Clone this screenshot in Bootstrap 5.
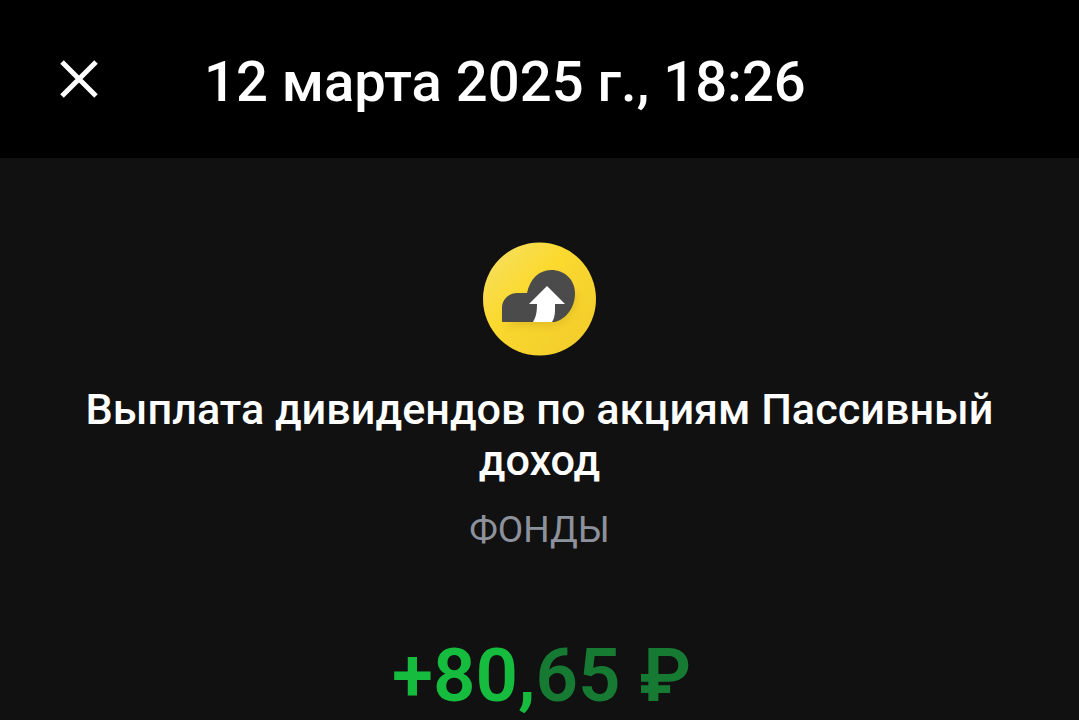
<!DOCTYPE html>
<html lang="ru">
<head>
    <meta charset="UTF-8">
    <meta name="viewport" content="width=device-width, initial-scale=1.0">
    <title>Операция</title>
    <link href="https://cdn.jsdelivr.net/npm/bootstrap@5.3.2/dist/css/bootstrap.min.css" rel="stylesheet">
    <style>
        html, body { height: 720px; overflow: hidden; }
        body { background: #111; font-family: Roboto, "Liberation Sans", sans-serif; color: #fff; }
        .top-bar { height: 158px; background: #000; padding-left: 58px; }
        .close-btn { width: 42px; height: 42px; padding: 0; background: none; border: 0; line-height: 0; margin-right: 104px; }
        .top-date { font-size: 56.2px; font-weight: 500; line-height: 1; margin: 6px 0 0; }
        .op-body { padding-top: 84px; }
        .op-title { font-size: 43.2px; font-weight: 500; line-height: 51px; width: 960px; margin: 28px 0 0; }
        .op-cat { font-size: 37px; font-weight: 400; color: #8d919c; line-height: 40px; margin-top: 24px; }
        .op-sum { font-size: 74.5px; font-weight: 600; line-height: 72px; margin-top: 90px; padding-left: 4px; color: #16bc3d; white-space: nowrap; }
        .op-sum span { color: #167a33; }
    </style>
</head>
<body>
    <div class="top-bar d-flex align-items-center">
        <button class="close-btn" type="button" aria-label="Закрыть">
            <svg width="42" height="42" viewBox="0 0 42 42"><path d="M4 4 38 38M38 4 4 38" stroke="#fff" stroke-width="5" fill="none"/></svg>
        </button>
        <h1 class="top-date">12 марта 2025 г., 18:26</h1>
    </div>
    <div class="op-body d-flex flex-column align-items-center text-center">
        <svg width="114" height="114" viewBox="0 0 114 114">
            <defs>
                <linearGradient id="yellowGrad" x1="0" y1="0" x2="1" y2="1">
                    <stop offset="0" stop-color="#f5e26a"/>
                    <stop offset="0.4" stop-color="#fbd92f"/>
                    <stop offset="1" stop-color="#f1cb2b"/>
                </linearGradient>
                <filter id="softShadow" x="-20%" y="-20%" width="140%" height="140%"><feGaussianBlur stdDeviation="4"/></filter>
            </defs>
            <circle cx="56.5" cy="57" r="56.5" fill="url(#yellowGrad)"/>
            <path d="M22 84H70C84 80 94 68 94 52L60 40Z" fill="#c9a21c" opacity=".45" filter="url(#softShadow)"/>
            <path d="M19 80V66C19 57 26 51 34 51H44C47 37 56 28 68 28C82 28 92 38 92 51C92 66 83 77 72 80Z" fill="#4b4b4b"/>
            <path d="M46 62 64 44 82 62H72V68C72 73 71 77 69 80H50C53 75 54 70 54 62Z" fill="#fff"/>
        </svg>
        <h2 class="op-title">Выплата дивидендов по акциям Пассивный доход</h2>
        <div class="op-cat">ФОНДЫ</div>
        <div class="op-sum">+80,<span>65 ₽</span></div>
    </div>
</body>
</html>
